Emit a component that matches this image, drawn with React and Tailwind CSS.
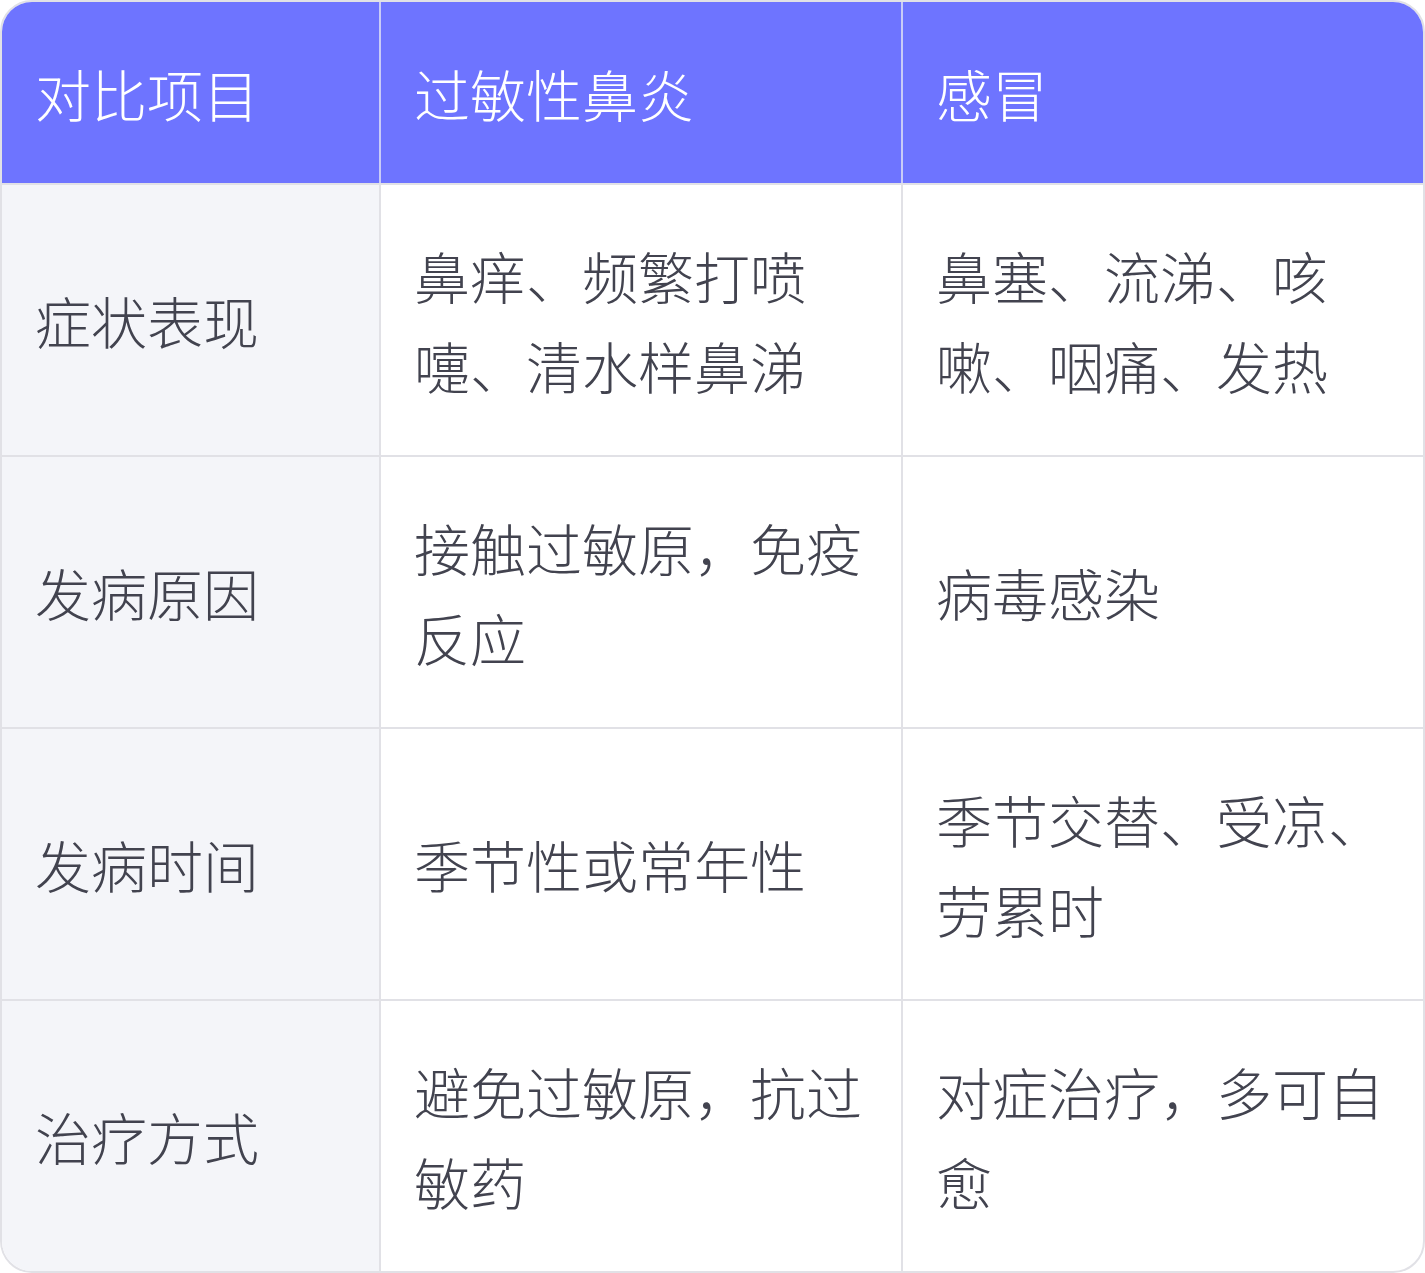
const rows = [
    ['症状表现', '鼻痒、频繁打喷嚏、清水样鼻涕', '鼻塞、流涕、咳嗽、咽痛、发热'],
    ['发病原因', '接触过敏原，免疫反应', '病毒感染'],
    ['发病时间', '季节性或常年性', '季节交替、受凉、劳累时'],
    ['治疗方式', '避免过敏原，抗过敏药', '对症治疗，多可自愈'],
];

const headers = ['对比项目', '过敏性鼻炎', '感冒'];

export default function App() {
    return (
        <div
            className="w-[1425px] h-[1273px] bg-white"
            style={{ fontFamily: '"Noto Sans CJK SC", "Noto Sans", sans-serif' }}
        >
            <div className="w-full h-full rounded-[32px] border-2 border-[#e1e1e6] overflow-hidden font-light">
                <div className="grid grid-cols-[377px_522px_522px] h-[181px] bg-[#6e74ff]">
                    {headers.map((h, i) => (
                        <div
                            key={h}
                            className={
                                'flex items-center pl-[33px] pr-[34px] text-[56px] leading-[90px] text-white ' +
                                (i > 0 ? 'border-l-2 border-[#c9cbf7]' : '')
                            }
                        >
                            {h}
                        </div>
                    ))}
                </div>
                {rows.map((row) => (
                    <div
                        key={row[0]}
                        className="grid grid-cols-[377px_522px_522px] h-[272px] border-t-2 border-[#e1e1e6]"
                    >
                        <div className="flex items-center pl-[33px] pr-[34px] bg-[#f4f5f9] text-[56px] leading-[90px] text-[#42434f]">
                            {row[0]}
                        </div>
                        <div className="flex items-center pl-[33px] pr-[34px] border-l-2 border-[#e1e1e6] text-[56px] leading-[90px] text-[#42434f]">
                            {row[1]}
                        </div>
                        <div className="flex items-center pl-[33px] pr-[34px] border-l-2 border-[#e1e1e6] text-[56px] leading-[90px] text-[#42434f]">
                            {row[2]}
                        </div>
                    </div>
                ))}
            </div>
        </div>
    );
}
